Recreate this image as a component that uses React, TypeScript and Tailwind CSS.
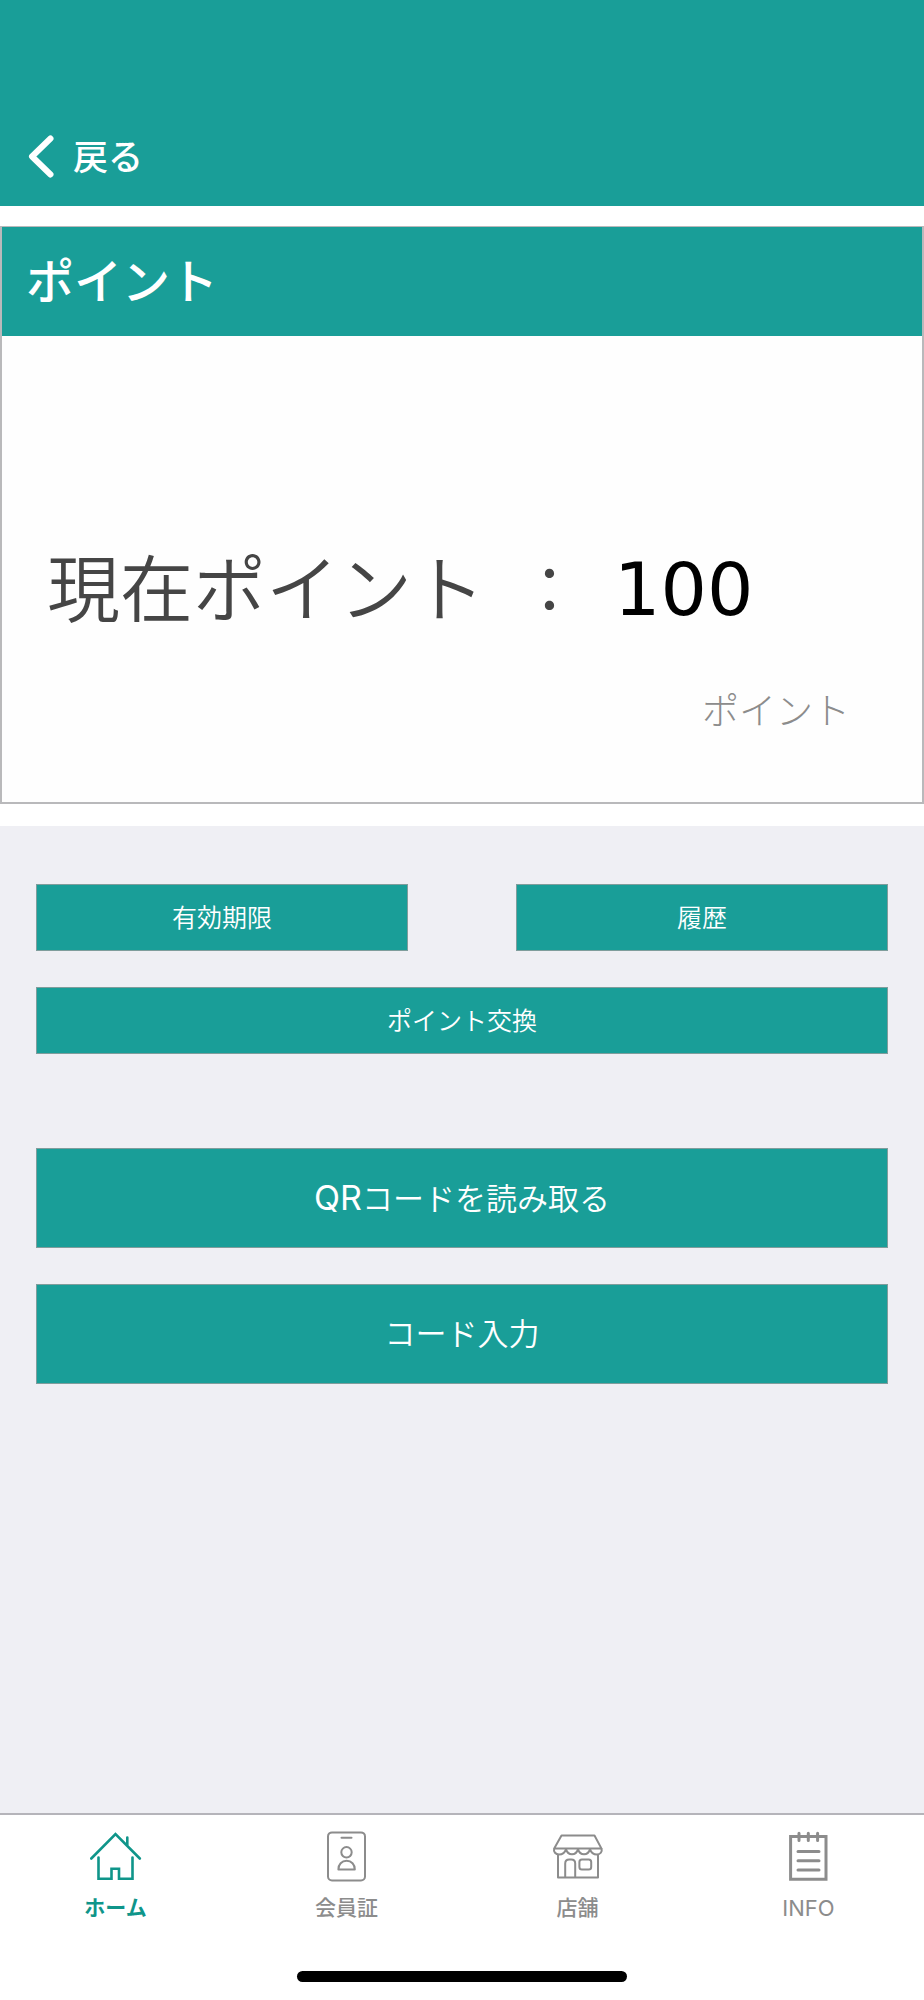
import { useState } from 'react';
import type { ReactNode } from 'react';

function HomeIcon() {
  return (
    <svg className="size-13" viewBox="1 0 52 52" fill="none" stroke="currentColor" strokeWidth="2.6" strokeLinecap="round" aria-hidden="true">
      <path d="M2.300 28.500 26.500 4l24.300 24.500M38.300 7.500v8" />
      <path d="M9.500 27.500V48.800H22.500V38.800H30V48.800H43.500V27.500" />
    </svg>
  );
}

function MemberIcon() {
  return (
    <svg className="size-13" viewBox="1 0 52 52" fill="none" stroke="currentColor" strokeWidth="2" strokeLinecap="round" strokeLinejoin="round" aria-hidden="true">
      <rect x="8" y="2.400" width="37" height="48" rx="4" />
      <path d="M21.500 7.700h10" />
      <circle cx="26.500" cy="22.300" r="5.200" />
      <path d="M18.400 39.400c0-5 3.300-8.600 8.200-8.600s8.200 3.600 8.200 8.600z" />
    </svg>
  );
}

function StoreIcon() {
  return (
    <svg className="size-13" viewBox="0 0 52 52" fill="none" stroke="currentColor" strokeWidth="2" strokeLinejoin="round" aria-hidden="true">
      <path d="M9.500 5.500h33L49.500 18.600H2.200z" />
      <path d="M2.200 18.600c-1 3.200 1.500 5.900 4.800 5.900 3.500 0 6-2 7-5.400 1 3.400 3 5.200 6 5.200s5-1.800 6-5.200c1 3.400 3 5.200 6 5.200s5-1.800 6-5.200c1 3.400 3.500 5.400 7 5.400 3.300 0 5.500-2.700 4.500-5.900" />
      <path d="M6 24.500v23h40v-23" />
      <path d="M13.200 47.500V33.500c0-2.600 1.400-4 4-4h2c2.600 0 4 1.400 4 4v14" />
      <rect x="27.400" y="29.500" width="11.800" height="10" rx="2.500" />
    </svg>
  );
}

function InfoIcon() {
  return (
    <svg className="size-13" viewBox="1 0 52 52" fill="none" stroke="currentColor" strokeWidth="3" strokeLinecap="round" aria-hidden="true">
      <path d="M8.600 6.500h35.400v42.700H8.600z" />
      <path d="M17 3.200v7.300M26.300 3.200v7.300M35.600 3.200v7.300" />
      <path d="M16 21.500h21M16 30.700h21M16 40h21" />
    </svg>
  );
}

const tabs: { id: string; label: string; icon: ReactNode; text: string }[] = [
  { id: 'home', label: 'ホーム', icon: <HomeIcon />, text: 'text-[21px] font-bold' },
  { id: 'member', label: '会員証', icon: <MemberIcon />, text: 'text-[21px] font-medium' },
  { id: 'store', label: '店舗', icon: <StoreIcon />, text: 'text-[21px] font-medium' },
  { id: 'info', label: 'INFO', icon: <InfoIcon />, text: 'text-[22px] font-normal' },
];

const smallButton =
  'h-[67px] border border-[#7f9d9c] bg-[#199e98] text-[25px] leading-8 font-[350] text-white';
const largeButton =
  'h-[100px] border border-[#7f9d9c] bg-[#199e98] text-[31px] leading-10 font-[350] text-white';

export default function App() {
  const [activeTab, setActiveTab] = useState('home');

  return (
    <div className="flex min-h-screen flex-col bg-[#efeff4] font-['Inter','Noto_Sans_CJK_JP',sans-serif]">
      <header className="bg-[#199e98] px-6 pt-[133px] pb-[25px] text-white">
        <button className="flex items-center gap-[17px]">
          <svg className="h-12 w-8" viewBox="0 0 32 48" fill="none" stroke="currentColor" strokeWidth="6" strokeLinecap="round" strokeLinejoin="round" aria-hidden="true">
            <path d="M26.500 5.500 8 23.500 26.500 41.500" />
          </svg>
          <span className="text-[35px] leading-12 font-medium">戻る</span>
        </button>
      </header>

      <main className="flex flex-1 flex-col">
        <div className="bg-white pt-5 pb-[22px]">
          <section className="border-2 border-t border-[#b9b9bb]">
            <h1 className="bg-[#199e98] px-6 pt-[19px] pb-[18px] text-[48px] leading-[72px] font-medium text-white">
              ポイント
            </h1>
            <div className="bg-[#fefefe] px-[45px] pt-[199px] pb-[66px]">
              <div className="flex items-center gap-7 text-[73px] leading-[110px] whitespace-nowrap">
                <span className="font-[350] text-[#454545]">現在ポイント</span>
                <span className="w-[73px] text-center text-[64px] font-[350] text-[#454545]">：</span>
                <span className="font-['DejaVu_Sans',sans-serif] text-black">100</span>
              </div>
              <p className="mt-[43px] pr-[27px] text-right text-[37px] leading-12 font-light text-[#8c8c8c]">ポイント</p>
            </div>
          </section>
        </div>

        <div className="flex flex-col px-9 pt-[58px]">
          <div className="grid grid-cols-2 gap-x-[108px]">
            <button className={smallButton}>有効期限</button>
            <button className={smallButton}>履歴</button>
          </div>
          <button className={`mt-9 ${smallButton}`}>ポイント交換</button>
          <button className={`mt-[94px] ${largeButton}`}>
            <span className="text-[34px] font-normal">QR</span>コードを読み取る
          </button>
          <button className={`mt-9 ${largeButton}`}>コード入力</button>
        </div>
      </main>

      <footer className="border-t-2 border-[#b5b4ba] bg-white pt-[15px] pb-[18px]">
        <nav className="grid grid-cols-4">
          {tabs.map((tab) => (
            <button
              key={tab.id}
              onClick={() => setActiveTab(tab.id)}
              className={`flex flex-col items-center gap-[14px] ${activeTab === tab.id ? 'text-[#0f958a]' : 'text-[#8c8c8c]'}`}
            >
              {tab.icon}
              <span className={`leading-6 ${tab.text}`}>{tab.label}</span>
            </button>
          ))}
        </nav>
        <div className="mx-auto mt-[51px] h-[11px] w-[330px] rounded-full bg-black" />
      </footer>
    </div>
  );
}
